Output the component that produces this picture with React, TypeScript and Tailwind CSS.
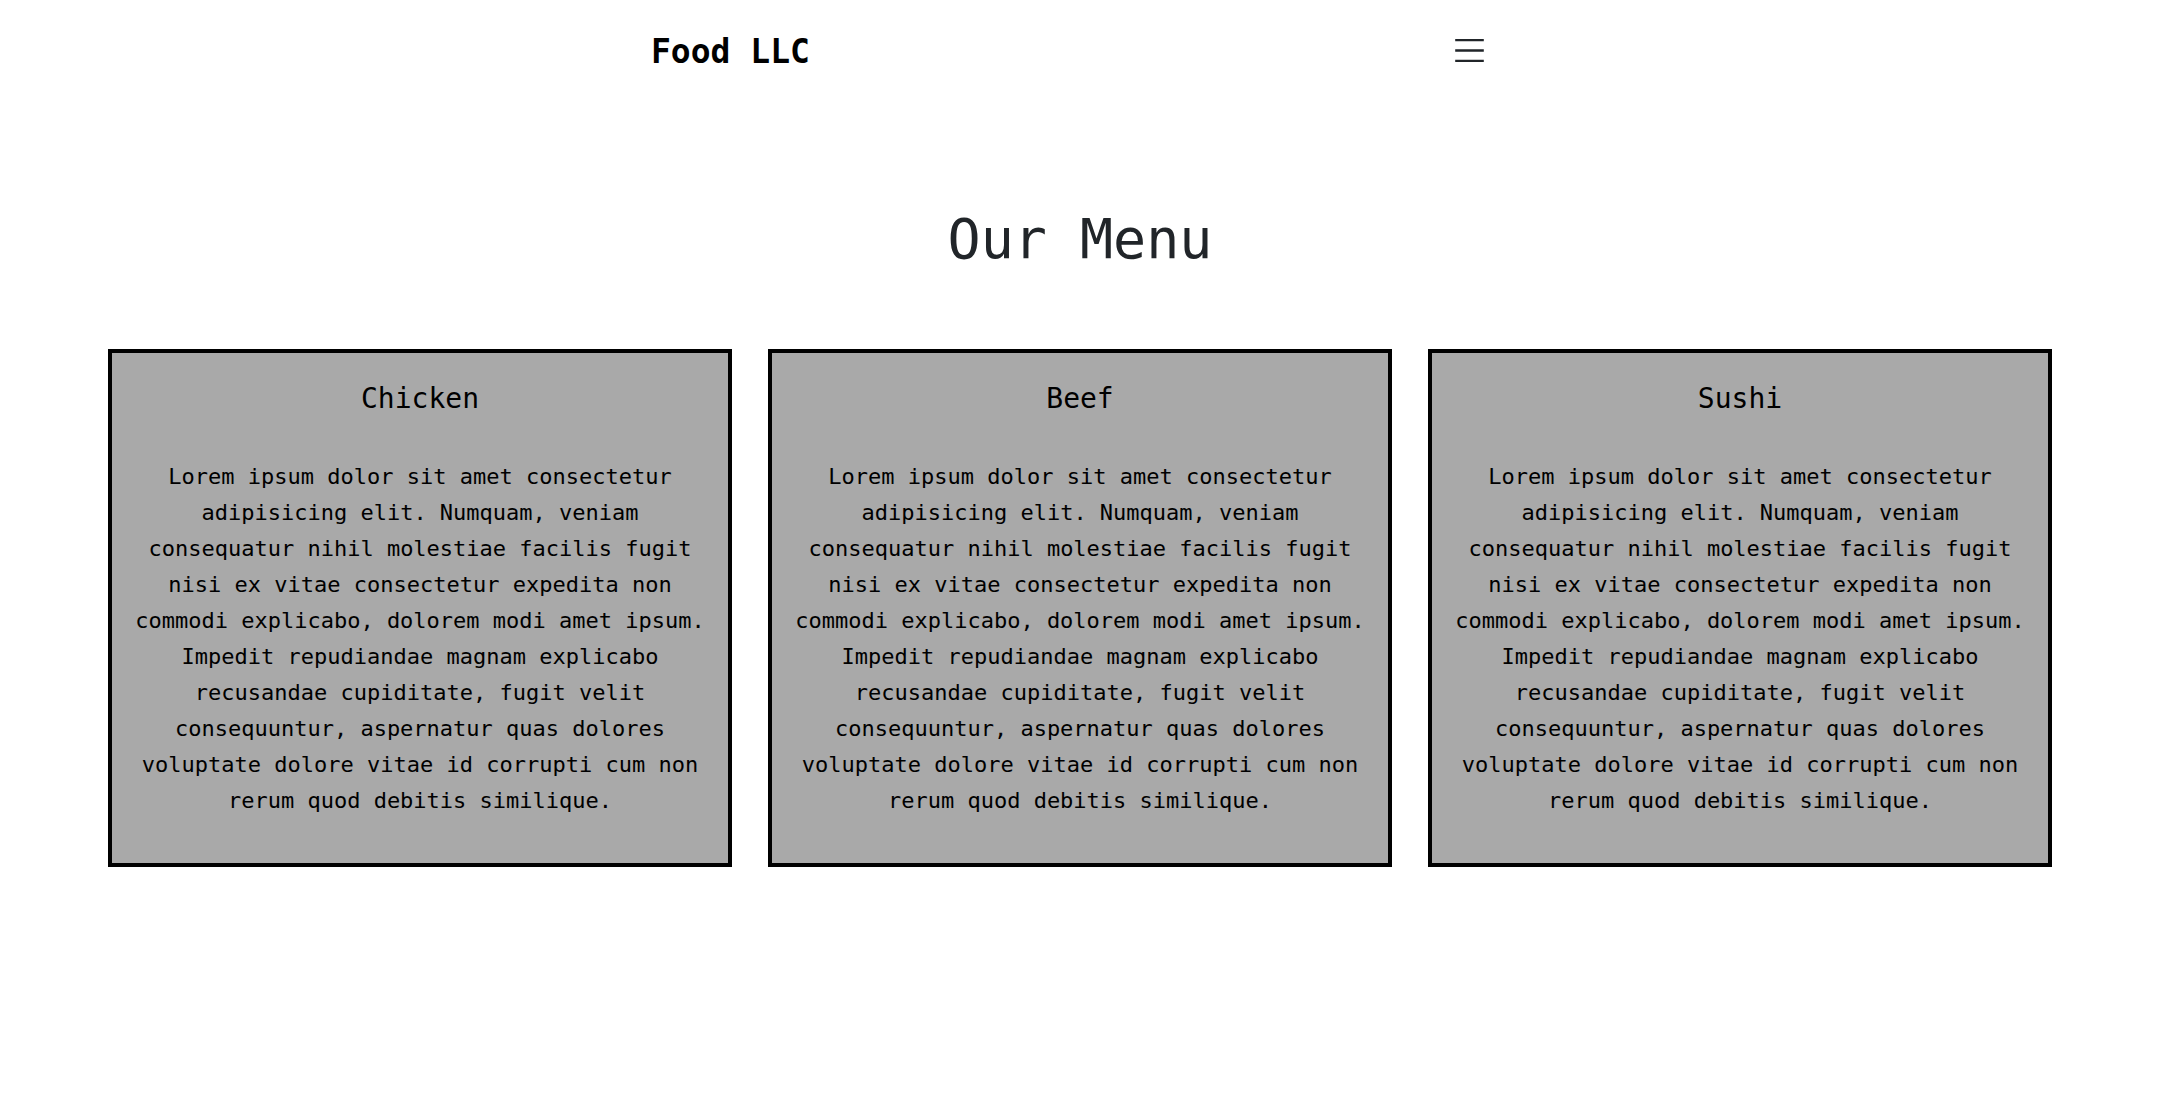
const items = [
  { name: "Chicken" },
  { name: "Beef" },
  { name: "Sushi" },
];

const lorem =
  "Lorem ipsum dolor sit amet consectetur adipisicing elit. Numquam, veniam consequatur nihil molestiae facilis fugit nisi ex vitae consectetur expedita non commodi explicabo, dolorem modi amet ipsum. Impedit repudiandae magnam explicabo recusandae cupiditate, fugit velit consequuntur, aspernatur quas dolores voluptate dolore vitae id corrupti cum non rerum quod debitis similique.";

export default function App() {
  return (
    <div className="min-h-screen bg-white font-['DejaVu_Sans_Mono','Liberation_Mono',monospace] text-[#212529]">
      <header className="flex h-[100px] items-center">
        <a className="ml-[651px] mt-[3px] text-[33px] font-bold text-black">Food LLC</a>
        <button type="button" className="ml-[640px] h-[39px] w-[39px]">
          <svg viewBox="0 0 30 30" width="39" height="39">
            <path d="M4 7h22M4 15h22M4 23h22" stroke="#212529" strokeWidth="1.8" strokeLinecap="butt" />
          </svg>
        </button>
      </header>

      <h1 className="mt-[106px] text-center text-[55px] leading-[66px] font-normal">Our Menu</h1>

      <div className="mt-[77px] grid grid-cols-3 gap-9 px-[108px]">
        {items.map((item) => (
          <div key={item.name} className="border-4 border-black bg-[#a9a9a9] px-5 pt-[29px] pb-[44px] text-center text-black">
            <h5 className="mb-[43px] text-[28px] leading-[34px]">{item.name}</h5>
            <p className="text-[22px] leading-[36px]">{lorem}</p>
          </div>
        ))}
      </div>
    </div>
  );
}
